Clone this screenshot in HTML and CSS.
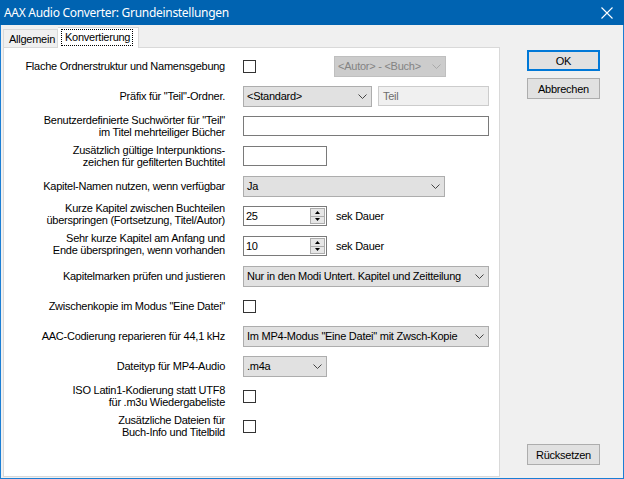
FILE: index.html
```html
<!DOCTYPE html>
<html lang="de">
<head>
<meta charset="utf-8">
<title>AAX Audio Converter: Grundeinstellungen</title>
<link rel="stylesheet" href="styles.css">
</head>
<body>
<div class="window">
  <div class="titlebar">
    <span class="title">AAX Audio Converter: Grundeinstellungen</span>
    <svg class="close" width="12" height="12" viewBox="0 0 12 12"><path d="M0.5 0.5 L11.5 11.5 M11.5 0.5 L0.5 11.5" stroke="#fff" stroke-width="1.1" fill="none"/></svg>
  </div>
  <div class="client">
    <div class="left">
      <div class="tabs">
        <div class="tab">Allgemein</div>
        <div class="tab active"><span class="focus">Konvertierung</span></div>
      </div>
      <div class="panel">
        <div class="row">
          <div class="label">Flache Ordnerstruktur und Namensgebung</div>
          <div class="ctrl">
            <span class="check"></span>
            <div class="combo disabled w112 ml78"><span>&lt;Autor&gt; - &lt;Buch&gt;</span><svg class="chev" width="9" height="5" viewBox="0 0 9 5"><polyline points="0.5,0.5 4.5,4.5 8.5,0.5" fill="none" stroke="#A9A9A9"/></svg></div>
          </div>
        </div>
        <div class="row">
          <div class="label">Präfix für "Teil"-Ordner.</div>
          <div class="ctrl">
            <div class="combo w129"><span>&lt;Standard&gt;</span><svg class="chev" width="9" height="5" viewBox="0 0 9 5"><polyline points="0.5,0.5 4.5,4.5 8.5,0.5" fill="none" stroke="#444"/></svg></div>
            <div class="text disabled w111 ml6">Teil</div>
          </div>
        </div>
        <div class="row">
          <div class="label">Benutzerdefinierte Suchwörter für "Teil"<br>im Titel mehrteiliger Bücher</div>
          <div class="ctrl"><div class="text w246"></div></div>
        </div>
        <div class="row">
          <div class="label">Zusätzlich gültige Interpunktions-<br>zeichen für gefilterten Buchtitel</div>
          <div class="ctrl"><div class="text w84"></div></div>
        </div>
        <div class="row">
          <div class="label">Kapitel-Namen nutzen, wenn verfügbar</div>
          <div class="ctrl">
            <div class="combo w202"><span>Ja</span><svg class="chev" width="9" height="5" viewBox="0 0 9 5"><polyline points="0.5,0.5 4.5,4.5 8.5,0.5" fill="none" stroke="#444"/></svg></div>
          </div>
        </div>
        <div class="row">
          <div class="label up">Kurze Kapitel zwischen Buchteilen<br>überspringen (Fortsetzung, Titel/Autor)</div>
          <div class="ctrl">
            <div class="spin w84"><span class="val">25</span><span class="btns"><span class="sb"><svg width="5" height="3" viewBox="0 0 5 3"><polygon points="2.5,0 5,3 0,3" fill="#000"/></svg></span><span class="sb"><svg width="5" height="3" viewBox="0 0 5 3"><polygon points="0,0 5,0 2.5,3" fill="#000"/></svg></span></span></div>
            <span class="unit">sek Dauer</span>
          </div>
        </div>
        <div class="row">
          <div class="label up">Sehr kurze Kapitel am Anfang und<br>Ende überspringen, wenn vorhanden</div>
          <div class="ctrl">
            <div class="spin w84"><span class="val">10</span><span class="btns"><span class="sb"><svg width="5" height="3" viewBox="0 0 5 3"><polygon points="2.5,0 5,3 0,3" fill="#000"/></svg></span><span class="sb"><svg width="5" height="3" viewBox="0 0 5 3"><polygon points="0,0 5,0 2.5,3" fill="#000"/></svg></span></span></div>
            <span class="unit">sek Dauer</span>
          </div>
        </div>
        <div class="row">
          <div class="label">Kapitelmarken prüfen und justieren</div>
          <div class="ctrl">
            <div class="combo w246"><span>Nur in den Modi Untert. Kapitel und Zeitteilung</span><svg class="chev" width="9" height="5" viewBox="0 0 9 5"><polyline points="0.5,0.5 4.5,4.5 8.5,0.5" fill="none" stroke="#444"/></svg></div>
          </div>
        </div>
        <div class="row">
          <div class="label">Zwischenkopie im Modus "Eine Datei"</div>
          <div class="ctrl"><span class="check"></span></div>
        </div>
        <div class="row">
          <div class="label">AAC-Codierung reparieren für 44,1 kHz</div>
          <div class="ctrl">
            <div class="combo w246"><span>Im MP4-Modus "Eine Datei" mit Zwsch-Kopie</span><svg class="chev" width="9" height="5" viewBox="0 0 9 5"><polyline points="0.5,0.5 4.5,4.5 8.5,0.5" fill="none" stroke="#444"/></svg></div>
          </div>
        </div>
        <div class="row">
          <div class="label">Dateityp für MP4-Audio</div>
          <div class="ctrl">
            <div class="combo w84"><span>.m4a</span><svg class="chev" width="9" height="5" viewBox="0 0 9 5"><polyline points="0.5,0.5 4.5,4.5 8.5,0.5" fill="none" stroke="#444"/></svg></div>
          </div>
        </div>
        <div class="row">
          <div class="label">ISO Latin1-Kodierung statt UTF8<br>für .m3u Wiedergabeliste</div>
          <div class="ctrl"><span class="check"></span></div>
        </div>
        <div class="row">
          <div class="label">Zusätzliche Dateien für<br>Buch-Info und Titelbild</div>
          <div class="ctrl"><span class="check"></span></div>
        </div>
      </div>
    </div>
    <div class="right">
      <div class="btn default">OK</div>
      <div class="btn">Abbrechen</div>
      <div class="btn bottom">Rücksetzen</div>
    </div>
  </div>
</div>
</body>
</html>
```
FILE: styles.css
```css
* { box-sizing: border-box; }
html, body { margin: 0; padding: 0; }
body {
  width: 624px; height: 479px; overflow: hidden;
  font-family: "Liberation Sans", Arial, sans-serif;
  font-size: 11px; color: #000; letter-spacing: -0.25px;
}
.window { width: 624px; height: 479px; display: flex; flex-direction: column; }
.titlebar {
  height: 25px; background: #0063B1; color: #fff;
  display: flex; align-items: center; padding-left: 4px; padding-right: 11px;
}
.title { font-family: "Noto Sans", "Open Sans", sans-serif; font-size: 12px; flex: 1; letter-spacing: -0.3px; }
.close { display: block; }
.client {
  flex: 1; background: #F0F0F0;
  border: 1px solid #1B7ED4; border-top: none;
  display: flex; padding-left: 2px;
}
.left { width: 497px; display: flex; flex-direction: column; }
.tabs { height: 22px; display: flex; align-items: flex-end; }
.tab {
  height: 18px; width: 55px; padding-left: 5px; line-height: 18px; white-space: nowrap;
  border: 1px solid #D9D9D9; border-bottom: none; background: #F0F0F0;
}
.tab.active {
  height: 21px; width: 81px; margin-bottom: -1px; background: #fff;
  border-left: none; padding: 2px 0 0 4px; line-height: normal; position: relative; z-index: 1;
}
.focus { display: inline-block; outline: 1px dotted #000; padding: 0 2px 0 3px; line-height: 14px; height: 15px; }
.panel {
  flex: 1; margin-bottom: 1px; background: #fff;
  border: 1px solid #D9D9D9; padding-top: 3px;
}
.row { height: 30px; display: flex; align-items: center; }
.label { width: 221px; text-align: right; line-height: 12px; flex: none; }
.label.up { margin-top: -4px; }
.ctrl { margin-left: 18px; display: flex; align-items: center; }
.check { width: 13px; height: 13px; border: 1px solid #333; background: #fff; display: block; }
.combo {
  height: 21px; background: #E1E1E1; border: 1px solid #ADADAD;
  display: flex; align-items: center; justify-content: space-between;
  padding: 0 4px 0 3px; white-space: nowrap; overflow: hidden;
}
.combo.disabled { background: #CCCCCC; border-color: #BFBFBF; color: #838383; }
.chev { display: block; flex: none; }
.text { height: 20px; background: #fff; border: 1px solid #7A7A7A; padding: 3px 0 0 4px; }
.text.disabled { background: #F0F0F0; border-color: #CCCCCC; color: #6D6D6D; }
.spin {
  height: 20px; border: 1px solid #7A7A7A; background: #fff;
  display: flex; justify-content: space-between; padding: 1px 1px 1px 0;
}
.val { padding: 2px 0 0 2px; }
.btns { width: 15px; display: flex; flex-direction: column; }
.sb {
  flex: 1; background: #E6E6E6; border: 1px solid #ADADAD;
  display: flex; align-items: center; justify-content: center;
}
.sb + .sb { border-top: none; }
.sb svg { display: block; }
.unit { margin-left: 9px; }
.w84 { width: 84px; } .w111 { width: 111px; } .w112 { width: 112px; }
.w129 { width: 129px; } .w202 { width: 202px; } .w246 { width: 246px; }
.ml6 { margin-left: 6px; } .ml78 { margin-left: 78px; }
.right { margin-left: 27px; width: 73px; display: flex; flex-direction: column; padding-top: 25px; padding-bottom: 13px; }
.btn {
  height: 21px; background: #E1E1E1; border: 1px solid #ADADAD;
  display: flex; align-items: center; justify-content: center; margin-bottom: 7px;
}
.btn.default { border: 2px solid #0078D7; }
.btn.bottom { margin-top: auto; margin-bottom: 0; }
```
